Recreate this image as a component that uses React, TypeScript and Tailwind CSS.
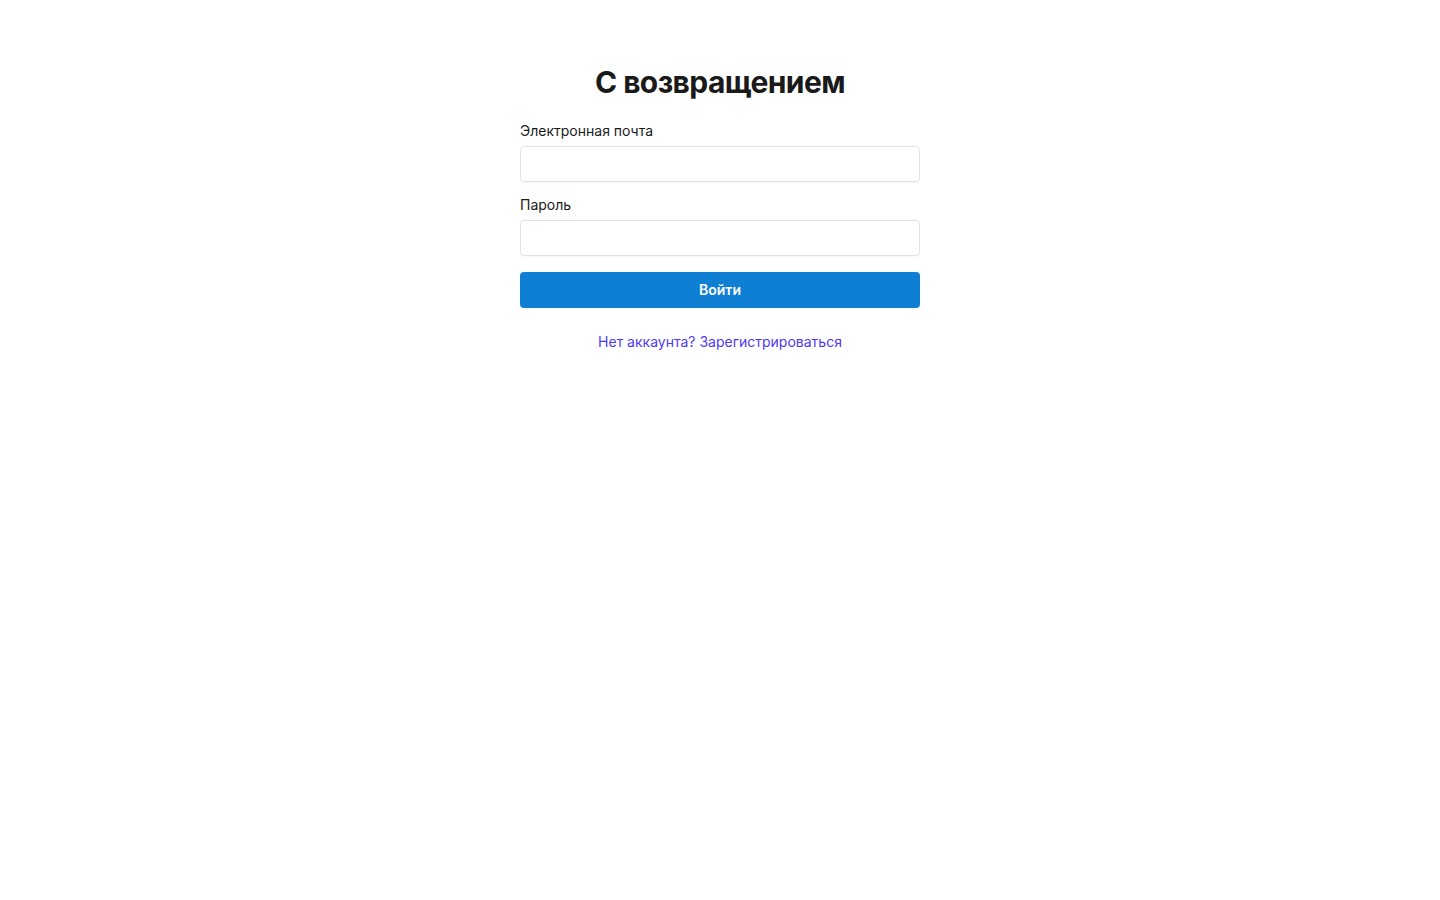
export default function App() {
  return (
    <div className="min-h-screen bg-white font-['Inter',sans-serif] text-[#1a1a1a]">
      <div className="mx-auto w-[400px] pt-16">
        <h1 className="text-center text-[30px] font-bold leading-9 tracking-[-0.02em]">
          С возвращением
        </h1>
        <form className="mt-[21px] flex flex-col">
          <label className="text-sm leading-5 text-[#1a1a1a]">Электронная почта</label>
          <input
            type="email"
            className="mt-[5px] h-9 w-full rounded-[4px] border border-[#e2e2e2] bg-white px-3 text-sm shadow-[0_1px_1px_rgba(0,0,0,0.03)] outline-none"
          />
          <label className="mt-[13px] text-sm leading-5 text-[#1a1a1a]">Пароль</label>
          <input
            type="password"
            className="mt-[5px] h-9 w-full rounded-[4px] border border-[#e2e2e2] bg-white px-3 text-sm shadow-[0_1px_1px_rgba(0,0,0,0.03)] outline-none"
          />
          <button
            type="button"
            className="mt-4 h-9 w-full rounded-[4px] bg-[#0f7fd4] text-sm font-semibold text-white"
          >
            Войти
          </button>
        </form>
        <p className="mt-6 text-center text-sm leading-5">
          <a href="#" className="text-[#4f39f6]">
            Нет аккаунта? Зарегистрироваться
          </a>
        </p>
      </div>
    </div>
  );
}
